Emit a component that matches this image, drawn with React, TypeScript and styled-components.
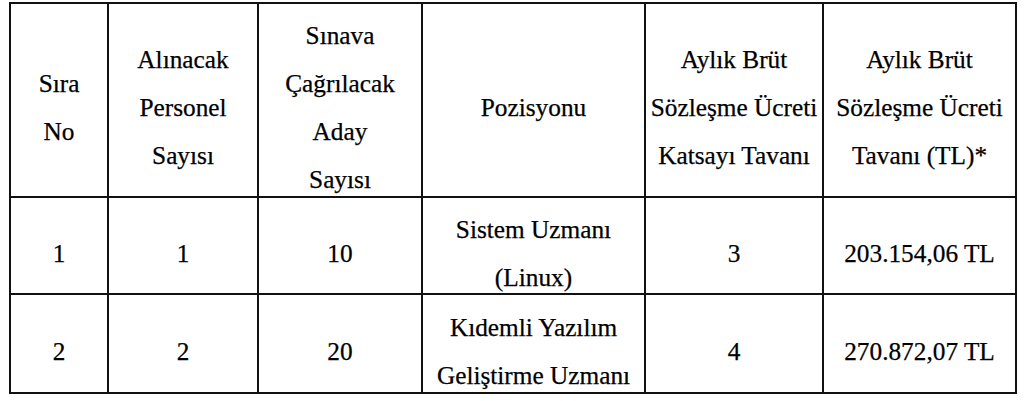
import React from "react";
import styled, { createGlobalStyle } from "styled-components";

const GlobalStyle = createGlobalStyle`
  html, body {
    margin: 0;
    padding: 0;
    background: #ffffff;
  }
`;

interface CellProps {
  lines: string[];
}

const headers: string[][] = [
  ["Sıra", "No"],
  ["Alınacak", "Personel", "Sayısı"],
  ["Sınava", "Çağrılacak", "Aday", "Sayısı"],
  ["Pozisyonu"],
  ["Aylık Brüt", "Sözleşme Ücreti", "Katsayı Tavanı"],
  ["Aylık Brüt", "Sözleşme Ücreti", "Tavanı (TL)*"],
];

const rows: string[][][] = [
  [["1"], ["1"], ["10"], ["Sistem Uzmanı", "(Linux)"], ["3"], ["203.154,06 TL"]],
  [["2"], ["2"], ["20"], ["Kıdemli Yazılım", "Geliştirme Uzmanı"], ["4"], ["270.872,07 TL"]],
];

const Cell: React.FC<CellProps> = ({ lines }) => {
  return (
    <CellBox>
      {lines.map((l, i) => (
        <Line key={i}>{l}</Line>
      ))}
    </CellBox>
  );
};

const App: React.FC = () => {
  return (
    <>
      <GlobalStyle />
      <Page>
        <Table>
          {headers.map((h, i) => (
            <Cell key={"h" + i} lines={h} />
          ))}
          {rows.map((r, ri) =>
            r.map((c, ci) => <Cell key={ri + "-" + ci} lines={c} />)
          )}
        </Table>
      </Page>
    </>
  );
};
export default App;

const Page = styled.div`
  padding: 2px 0 0 9px;
  width: 1024px;
  height: 401px;
  box-sizing: border-box;
  overflow: hidden;
`;

const Table = styled.div`
  display: grid;
  grid-template-columns: 96px 148px 162px 221px 176px 191px;
  grid-template-rows: 192px 95px 97px;
  gap: 2px;
  padding: 2px;
  width: max-content;
  background-color: #111111;
`;

const CellBox = styled.div`
  display: flex;
  flex-direction: column;
  align-items: center;
  justify-content: center;
  min-height: 0;
  padding-top: 14px;
  box-sizing: border-box;
  background-color: #ffffff;
  font-family: "Liberation Serif", "Times New Roman", serif;
  font-size: 25.3px;
  line-height: 48px;
  color: #000000;
  -webkit-text-stroke: 0.25px #000000;
`;

const Line = styled.div`
  white-space: nowrap;
  text-align: center;
`;
